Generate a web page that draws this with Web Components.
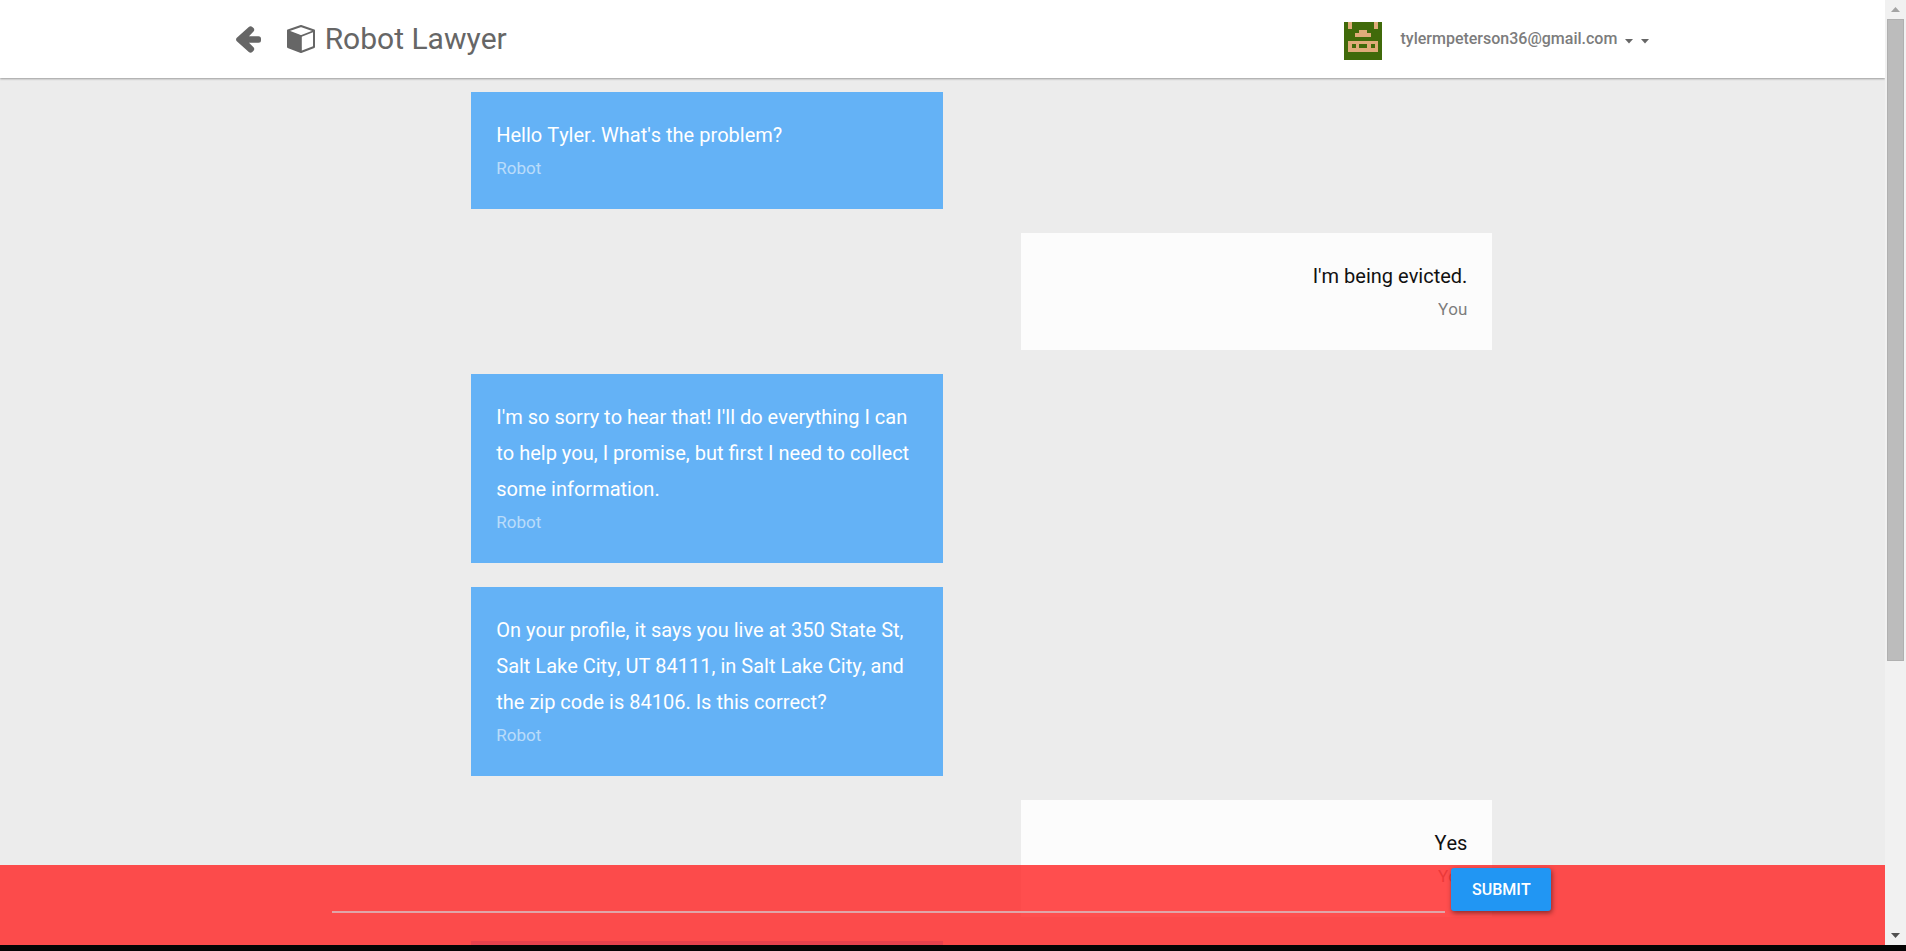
<!DOCTYPE html>
<html lang="en">
<head>
<meta charset="utf-8">
<title>Robot Lawyer</title>
<style>
  html, body { height: 100%; margin: 0; overflow: hidden; }
  body { font-family: Roboto, sans-serif; font-kerning: none; background: #050505; }
</style>
</head>
<body>
<robot-app></robot-app>

<template id="t-app">
  <style>
    :host { display: grid; grid-template-columns: minmax(0, 1fr) auto; height: calc(100vh - 6px); background: #ececec; overflow: hidden; }
    .page { position: relative; display: flex; flex-direction: column; min-height: 0; overflow: hidden; }
    main { flex: 1; min-height: 0; padding-top: 14px; display: flex; flex-direction: column; gap: 24px; overflow: hidden; }
    reply-bar { position: absolute; left: 0; right: 0; bottom: 0; }
  </style>
  <div class="page">
    <app-header></app-header>
    <main>
      <chat-message>Hello Tyler. What's the problem?<span slot="author">Robot</span></chat-message>
      <chat-message mine>I'm being evicted.<span slot="author">You</span></chat-message>
      <chat-message>I'm so sorry to hear that! I'll do everything I can to help you, I promise, but first I need to collect some information.<span slot="author">Robot</span></chat-message>
      <chat-message>On your profile, it says you live at 350 State St, Salt Lake City, UT 84111, in Salt Lake City, and the zip code is 84106. Is this correct?<span slot="author">Robot</span></chat-message>
      <chat-message mine>Yes<span slot="author">You</span></chat-message>
      <chat-message></chat-message>
    </main>
    <reply-bar></reply-bar>
  </div>
  <scroll-track></scroll-track>
</template>

<template id="t-header">
  <style>
    :host { display: flex; align-items: center; box-sizing: border-box; flex: none; height: 78px; padding: 0 12.5%; background: #fff; color: #666; box-shadow: 0 1px 2px rgba(0,0,0,.35); z-index: 1; }
    a, button { color: inherit; text-decoration: none; display: flex; align-items: center; }
    svg { display: block; fill: currentColor; }
    .back { margin-right: 26px; }
    .brand { gap: 10px; font-size: 30px; line-height: 36px; }
    .account { margin-left: auto; gap: 18px; padding: 0; border: 0; background: none; font: 500 16px/20px Roboto, sans-serif; font-kerning: none; color: #7c7c7c; }
    .avatar { margin-top: 4px; }
    .carets { display: flex; gap: 8px; margin: 4px 0 0 -10px; color: #666; }
  </style>
  <a class="back" href="#" aria-label="Back">
    <svg width="25" height="27" viewBox="0 0 25 27"><path d="M12.800 0.900c1-1 2.600-1 3.500 0l1.200 1.200c1 1 1 2.500 0 3.500L13 10.300H22.500a2.500 2.500 0 0 1 2.500 2.500v1.500a2.500 2.500 0 0 1-2.500 2.500H13l4.500 4.500c1 1 1 2.500 0 3.500l-1.200 1.200c-1 1-2.500 1-3.500 0L.800 15.300c-1-1-1-2.500 0-3.500z"/></svg>
  </a>
  <a class="brand" href="#">
    <svg width="28" height="28" viewBox="0 0 28 28"><path d="M14 1 27 5.500V22L14 27 1 22V5.500Z" fill="none" stroke="currentColor" stroke-width="2" stroke-linejoin="round"/><path d="M1 6 14 11 27 6" fill="none" stroke="currentColor" stroke-width="1.800"/><path d="M1 6 14.800 11V27L1 22Z"/></svg>
    <span>Robot Lawyer</span>
  </a>
  <button class="account" type="button">
    <svg class="avatar" width="38" height="38" viewBox="0 0 38 38" shape-rendering="crispEdges">
      <path fill="#406a0a" d="M0 0h38v38H0z"/>
      <path fill="#e0ab79" d="M4 0h4v7H4zM30 0h4v7h-4zM15 8h8v3h4v4H11v-4h4zM4 19h30v11H4z"/>
      <path fill="#406a0a" d="M8 22h4v4H8zM15 22h8v4h-8zM27 22h4v4h-4z"/>
    </svg>
    <span>tylermpeterson36@gmail.com</span>
    <span class="carets">
      <svg width="8" height="5" viewBox="0 0 8 5"><path d="M0 0h8L4 4.500z"/></svg>
      <svg width="8" height="5" viewBox="0 0 8 5"><path d="M0 0h8L4 4.500z"/></svg>
    </span>
  </button>
</template>

<template id="t-message">
  <style>
    :host { display: block; box-sizing: border-box; flex: none; width: 25%; min-height: 117px; margin-left: 25%; padding: 25px; background: #64b2f6; color: #fff; }
    :host([mine]) { margin-left: auto; margin-right: 20.83%; background: #fcfcfc; color: #111; text-align: right; }
    p { margin: 0; font-size: 20px; line-height: 36px; }
    footer { font-size: 17px; line-height: 31px; opacity: .55; }
  </style>
  <p><slot></slot></p>
  <footer><slot name="author"></slot></footer>
</template>

<template id="t-reply">
  <style>
    :host { display: block; background: rgba(255,44,44,.84); }
    form { display: flex; align-items: flex-start; gap: 6px; box-sizing: border-box; height: 80px; padding: 3px 17.7% 0 17.6%; }
    input { flex: 1; min-width: 0; box-sizing: border-box; height: 45px; padding: 0; border: 0; border-bottom: 2px solid #e0a5a8; background: none; font: 20px Roboto, sans-serif; color: #fff; outline: 0; }
    button { width: 100px; height: 43px; padding: 0; border: 0; border-radius: 3px; background: #2196f3; color: #fff; font: 500 16px Roboto, sans-serif; font-kerning: none; text-transform: uppercase; box-shadow: 1px 2px 5px rgba(0,0,0,.45); }
  </style>
  <form onsubmit="return false">
    <input type="text" aria-label="Your reply">
    <button type="submit">Submit</button>
  </form>
</template>

<template id="t-scroll">
  <style>
    :host { display: flex; flex-direction: column; align-items: center; box-sizing: border-box; width: 21px; padding: 7px 0; background: #f1f1f1; }
    svg { display: block; flex: none; }
    .track { flex: 1; align-self: stretch; padding: 7px 2px; }
    .thumb { height: 70.8%; background: #bcbcbc; box-sizing: border-box; border: 1px solid #b0b0b0; }
  </style>
  <svg width="9" height="5" viewBox="0 0 9 5"><path fill="#a3a3a3" d="M4.500 0 9 5H0z"/></svg>
  <div class="track"><div class="thumb"></div></div>
  <svg width="9" height="5" viewBox="0 0 9 5"><path fill="#505050" d="M0 0h9L4.500 5z"/></svg>
</template>

<script>
  const define = (tag, id) => customElements.define(tag, class extends HTMLElement {
    constructor() {
      super();
      this.attachShadow({ mode: 'open' }).append(document.getElementById(id).content.cloneNode(true));
    }
  });
  define('app-header', 't-header');
  define('chat-message', 't-message');
  define('reply-bar', 't-reply');
  define('scroll-track', 't-scroll');
  define('robot-app', 't-app');
</script>
</body>
</html>
